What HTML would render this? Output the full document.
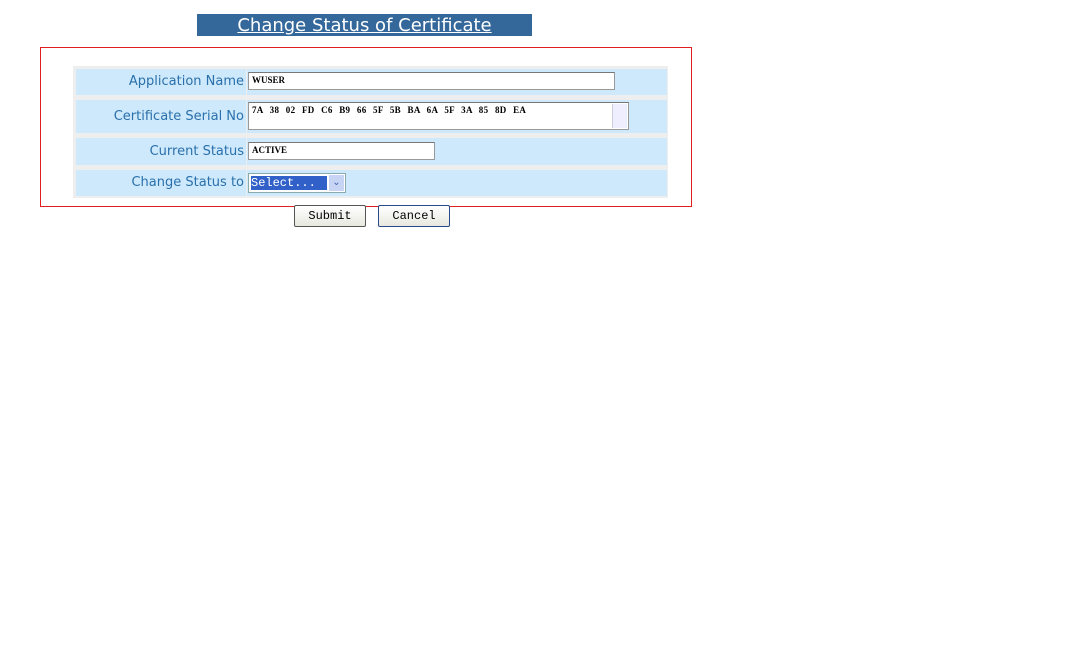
<!DOCTYPE html>
<html><head><style>
body{margin:0;background:#fff;width:1076px;height:648px;position:relative;font-family:"DejaVu Sans","Liberation Sans",sans-serif;overflow:hidden}
.a{position:absolute}
.title{left:197px;top:14px;width:335px;height:22px;background:#34679a;color:#fff;font-size:18px;text-align:center;line-height:23px;text-decoration:underline}
.box{left:40px;top:47px;width:650px;height:158px;border:1px solid #e02020}
.tbl{left:73px;top:66px;width:595px;height:132px;background:#eeeeee}
.lab{background:#cde9fb;color:#2a70ac;font-size:13px;text-align:right;box-sizing:border-box;padding-right:2px}
.val{background:#cde9fb}
.inp{background:#fff;border:1px solid #999;border-top-color:#777;box-sizing:border-box;font-family:"Liberation Serif",serif;font-weight:bold;font-size:9px;padding:2px 3px;color:#000}
.btn{top:205px;height:22px;width:72px;box-sizing:border-box;border:1px solid #555;border-radius:2px;background:linear-gradient(#fff,#e8e8e0);font-family:"Liberation Mono",monospace;font-size:12px;text-align:center;line-height:20px}
</style></head><body>
<div class="a title">Change Status of Certificate</div>
<div class="a box"></div>
<div class="a tbl"></div>
<div class="a lab" style="left:76px;top:69px;width:170px;height:26px;line-height:26px">Application Name</div>
<div class="a val" style="left:247px;top:69px;width:420px;height:26px"></div>
<div class="a lab" style="left:76px;top:100px;width:170px;height:33px;line-height:33px">Certificate Serial No</div>
<div class="a val" style="left:247px;top:100px;width:420px;height:33px"></div>
<div class="a lab" style="left:76px;top:138px;width:170px;height:27px;line-height:27px">Current Status</div>
<div class="a val" style="left:247px;top:138px;width:420px;height:27px"></div>
<div class="a lab" style="left:76px;top:170px;width:170px;height:26px;line-height:26px">Change Status to</div>
<div class="a val" style="left:247px;top:170px;width:420px;height:26px"></div>
<div class="a inp" style="left:248px;top:72px;width:367px;height:18px">WUSER</div>
<div class="a inp" style="left:248px;top:102px;width:381px;height:28px;word-spacing:4px;letter-spacing:0.3px">7A 38 02 FD C6 B9 66 5F 5B BA 6A 5F 3A 85 8D EA
<div class="a" style="right:1px;top:1px;width:14px;height:24px;background:#eef;border-left:1px solid #ccd"></div></div>
<div class="a inp" style="left:248px;top:142px;width:187px;height:18px">ACTIVE</div>
<div class="a" style="left:248px;top:173px;width:98px;height:20px;border:1px solid #8aa;box-sizing:border-box;background:#fff">
<div class="a" style="left:2px;top:2px;width:76px;height:14px;background:#3060c8;color:#fff;font-family:'Liberation Mono',monospace;font-size:12px;line-height:14px">Select...</div>
<div class="a" style="right:1px;top:1px;width:15px;height:16px;background:#c8d4f4;color:#4466aa;font-size:10px;text-align:center;line-height:16px">&#8964;</div></div>
<div class="a btn" style="left:294px">Submit</div>
<div class="a btn" style="left:378px;border-color:#2a4a8a">Cancel</div>
</body></html>
